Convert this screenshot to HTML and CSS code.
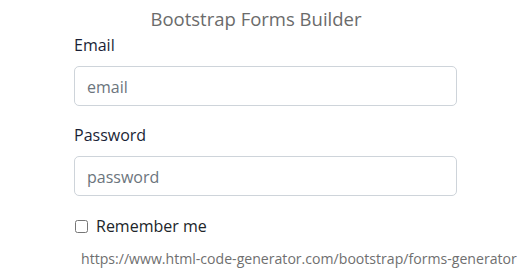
FILE: index.html
```html
<!DOCTYPE html>
<html lang="en">
<head>
<meta charset="utf-8">
<title>Bootstrap Forms Builder</title>
<link rel="stylesheet" href="styles.css">
</head>
<body>
<div class="page">
  <h1 class="title">Bootstrap Forms Builder</h1>
  <form class="form">
    <div class="group">
      <label class="label" for="email">Email</label>
      <input class="control" type="email" id="email" placeholder="email">
    </div>
    <div class="group">
      <label class="label" for="password">Password</label>
      <input class="control" type="password" id="password" placeholder="password">
    </div>
    <div class="check">
      <input class="check-input" type="checkbox" id="remember">
      <label class="check-label" for="remember">Remember me</label>
    </div>
  </form>
  <div class="url">https://www.html-code-generator.com/bootstrap/forms-generator</div>
</div>
</body>
</html>
```

FILE: styles.css
```css
* { box-sizing: border-box; }
html, body { margin: 0; padding: 0; background: #fff; }
body {
  font-family: "Open Sans", "Noto Sans", sans-serif;
  font-size: 16px;
  line-height: 1.5;
  color: #212529;
}
.page { width: 512px; }
.title {
  margin: 7px 0 0;
  font-size: 18.5px;
  font-weight: 400;
  line-height: 24px;
  color: #6b6b6b;
  text-align: center;
}
.form {
  margin: 2px 0 0 74px;
  width: 383px;
}
.group { margin-bottom: 17px; }
.label {
  display: block;
  margin-bottom: 9px;
  color: #1a1f36;
}
.control {
  display: block;
  width: 100%;
  height: 40px;
  padding: 8px 12px 6px;
  font-family: inherit;
  font-size: 16px;
  line-height: 24px;
  color: #495057;
  background: #fff;
  border: 1px solid #ced4da;
  border-radius: 5px;
  outline: none;
}
.control::placeholder { color: #6c757d; opacity: 1; }
.check {
  display: flex;
  align-items: center;
  margin-top: 18px;
  height: 24px;
}
.check-input {
  width: 13px;
  height: 13px;
  margin: 0 8px 0 1px;
}
.check-label { color: #212529; }
.url {
  margin: 10px 0 0 81px;
  font-size: 14.1px;
  line-height: 22px;
  color: #6f6f6f;
  white-space: nowrap;
}
```
